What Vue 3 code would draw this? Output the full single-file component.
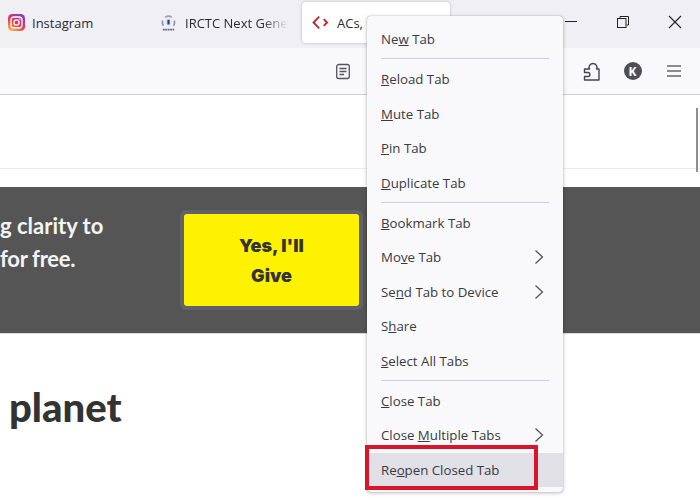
<template>
  <div class="window">
    <div class="tabbar">
      <div v-for="tab in tabs" :key="tab.label" class="tab" :class="{ active: tab.active }">
        <svg v-if="tab.icon === 'insta'" class="favicon" viewBox="0 0 18 18">
          <defs>
            <linearGradient id="ig" x1="0.2" y1="1" x2="0.8" y2="0">
              <stop offset="0" stop-color="#fdb44a" />
              <stop offset="0.45" stop-color="#e8384f" />
              <stop offset="0.75" stop-color="#c22f9b" />
              <stop offset="1" stop-color="#6a4bd0" />
            </linearGradient>
          </defs>
          <rect width="18" height="18" rx="4.5" fill="url(#ig)" />
          <rect x="3.2" y="3.2" width="11.6" height="11.6" rx="3.2" fill="none" stroke="#fff" stroke-width="1.4" />
          <circle cx="9" cy="9" r="2.7" fill="none" stroke="#fff" stroke-width="1.4" />
          <circle cx="12.6" cy="5.4" r="0.8" fill="#fff" />
        </svg>
        <svg v-else-if="tab.icon === 'irctc'" class="favicon" viewBox="0 0 18 18">
          <path d="M5.500 3.500a6 6 0 0 1 7 0" fill="none" stroke="#9a9fba" stroke-width="1.800" />
          <path d="M2.800 7a6.500 6.500 0 0 0 .7 5.500M15.200 7a6.500 6.500 0 0 1-.7 5.500" fill="none" stroke="#8a90b2" stroke-width="1.800" />
          <circle cx="9" cy="8.500" r="4" fill="#e4e6f0" />
          <path d="M7.800 6h2.400v5H7.800z" fill="#2e3a80" />
          <path d="M3 16.500h12" stroke="#5a64a0" stroke-width="1.800" stroke-dasharray="2 0.6" />
        </svg>
        <svg v-else class="favicon" viewBox="0 0 18 18">
          <path d="M7.600 2.800 1.600 9l6 6.200" fill="none" stroke="#c4262e" stroke-width="2" />
          <path d="M12.400 5.400 16 9l-3.600 3.600" fill="none" stroke="#c4262e" stroke-width="2" />
        </svg>
        <span class="tab-label" :class="{ faded: tab.faded }">{{ tab.label }}</span>
      </div>
      <div class="controls">
        <div class="control">
          <svg width="14" height="14" viewBox="0 0 14 14"><path d="M1 6.500h12" stroke="#222" stroke-width="1" /></svg>
        </div>
        <div class="control">
          <svg width="14" height="14" viewBox="0 0 14 14">
            <path d="M4 3V1.500h8.500V10H10.500" fill="none" stroke="#222" />
            <rect x="1.500" y="3.500" width="8.500" height="9" fill="none" stroke="#222" />
          </svg>
        </div>
        <div class="control">
          <svg width="14" height="14" viewBox="0 0 14 14"><path d="M1 1l12 12M13 1 1 13" stroke="#222" stroke-width="1.100" /></svg>
        </div>
      </div>
    </div>

    <div class="navbar">
      <svg class="reader" width="16" height="17" viewBox="0 0 16 17">
        <rect x="1.700" y="1.500" width="12.600" height="14" rx="2" fill="none" stroke="#55555a" stroke-width="1.300" />
        <path d="M4.500 5.500h7M4.500 8.500h7M4.500 11.500h4.500" stroke="#55555a" stroke-width="1.300" />
      </svg>
      <div class="nav-slot">
        <svg width="18" height="19" viewBox="0 0 18 19">
          <path d="M1.500 7H6.500C5.500 5.500 6 1.500 10 1.500C14 1.500 14.500 5.500 13.500 7H16V18H1.500V14.500H5C7.500 14.500 7.500 10.500 5 10.500H1.500Z" fill="none" stroke="#44444a" stroke-width="1.400" stroke-linejoin="round" />
        </svg>
      </div>
      <div class="nav-slot"><span class="avatar">K</span></div>
      <div class="nav-slot">
        <svg width="14" height="14" viewBox="0 0 14 14"><path d="M0 2h14M0 7h14M0 12h14" stroke="#66666c" stroke-width="1.400" /></svg>
      </div>
    </div>

    <div class="page">
      <div class="page-top"></div>
      <div class="banner">
        <p class="banner-text">
          <span class="line">g clarity to</span>
          <span class="line tail">for free.</span>
        </p>
        <div class="give-ring">
          <div class="give-btn">Yes, I'll<br />Give</div>
        </div>
      </div>
      <h1 class="heading">planet</h1>
      <div class="thumb"></div>
    </div>

    <div class="menu">
      <template v-for="(item, i) in menu" :key="i">
        <div v-if="item.sep" class="sep"></div>
        <div v-else class="item" :class="{ hover: item.hover }">
          <span>{{ item.before }}<u>{{ item.key }}</u>{{ item.after }}</span>
          <svg v-if="item.sub" class="chevron" width="10" height="16" viewBox="0 0 10 16">
            <path d="M1.500 1.500 8.500 8l-7 6.500" fill="none" stroke="#55555a" stroke-width="1.300" />
          </svg>
        </div>
      </template>
    </div>
    <div class="callout"></div>
  </div>
</template>

<script setup>
const tabs = [
  { label: 'Instagram', icon: 'insta' },
  { label: 'IRCTC Next Gene', icon: 'irctc', faded: true },
  { label: 'ACs,', icon: 'code', active: true },
]

const menu = [
  { before: 'Ne', key: 'w', after: ' Tab' },
  { sep: true },
  { before: '', key: 'R', after: 'eload Tab' },
  { before: '', key: 'M', after: 'ute Tab' },
  { before: '', key: 'P', after: 'in Tab' },
  { before: '', key: 'D', after: 'uplicate Tab' },
  { sep: true },
  { before: '', key: 'B', after: 'ookmark Tab' },
  { before: 'Mo', key: 'v', after: 'e Tab', sub: true },
  { before: 'Se', key: 'n', after: 'd Tab to Device', sub: true },
  { before: 'S', key: 'h', after: 'are' },
  { before: '', key: 'S', after: 'elect All Tabs' },
  { sep: true },
  { before: '', key: 'C', after: 'lose Tab' },
  { before: 'Close ', key: 'M', after: 'ultiple Tabs', sub: true },
  { before: 'Re', key: 'o', after: 'pen Closed Tab', hover: true },
]
</script>

<style>
html,
body {
  margin: 0;
  overflow: hidden;
}
</style>

<style scoped>
.window {
  position: relative;
  width: 700px;
  height: 500px;
  overflow: hidden;
  background: #fff;
  font-family: "Open Sans", "Noto Sans", sans-serif;
  color: #2b2a33;
}

.tabbar {
  display: flex;
  height: 48px;
  background: #f0f0f4;
}

.tab {
  display: flex;
  align-items: center;
  gap: 8px;
  box-sizing: border-box;
  width: 151px;
  height: 41px;
  margin-top: 2px;
  padding-left: 9px;
  border-radius: 4px;
  font-size: 13px;
  overflow: hidden;
  white-space: nowrap;
}

.tab:first-child {
  gap: 7px;
  padding-left: 8px;
}

.tab.active {
  width: 148px;
  padding-left: 10px;
  background: #fff;
  box-shadow: 0 0 3px rgba(0, 0, 0, 0.25);
}

.tab-label.faded {
  -webkit-mask-image: linear-gradient(to right, #000 75%, transparent);
  mask-image: linear-gradient(to right, #000 75%, transparent);
}

.favicon {
  flex: none;
  width: 17px;
  height: 17px;
}

.controls {
  display: flex;
  margin-left: auto;
  margin-right: -1px;
}

.control {
  display: flex;
  align-items: center;
  justify-content: center;
  width: 52px;
  height: 44px;
}

.navbar {
  display: flex;
  align-items: center;
  justify-content: flex-end;
  box-sizing: border-box;
  height: 47px;
  padding-right: 6px;
  background: #f9f9fb;
  border-bottom: 1px solid #cfcfd8;
}

.reader {
  margin-right: 220px;
}

.nav-slot {
  display: flex;
  align-items: center;
  justify-content: center;
  width: 41px;
}

.avatar {
  display: flex;
  align-items: center;
  justify-content: center;
  width: 18px;
  height: 18px;
  border-radius: 50%;
  background: #4f4f57;
  color: #fff;
  font-size: 12px;
  font-weight: 700;
}

.page {
  position: relative;
  height: 405px;
}

.page-top {
  height: 73px;
  border-bottom: 1px solid #ececec;
  margin-bottom: 18px;
}

.banner {
  display: flex;
  height: 147px;
  box-sizing: border-box;
  padding-top: 27px;
  background: #555;
  border-bottom: 1px solid #ddd;
}

.banner-text {
  width: 184px;
  margin: -5px 0 0;
  color: #f4f4f4;
  font-family: Lato, sans-serif;
  font-size: 22px;
  font-weight: 700;
  line-height: 33px;
}

.line {
  display: block;
}

.tail {
  letter-spacing: -0.3px;
}

.give-ring {
  box-sizing: border-box;
  width: 183px;
  height: 100px;
  margin: -4px 0 0 -4px;
  padding: 4px;
  border-radius: 6px;
  background: #62626a;
}

.give-btn {
  height: 92px;
  box-sizing: border-box;
  padding-top: 17px;
  border-radius: 3px;
  background: #fff200;
  color: #333;
  font-family: Inter, sans-serif;
  font-size: 18px;
  font-weight: 900;
  line-height: 30px;
  text-align: center;
}

.heading {
  margin: 49px 0 0 9px;
  color: #333;
  font-family: Lato, sans-serif;
  font-size: 40px;
  font-weight: 900;
  line-height: 48px;
}

.thumb {
  position: absolute;
  top: 13px;
  right: 2px;
  width: 2px;
  height: 64px;
  background: #8f8f8f;
}

.menu {
  position: absolute;
  top: 16px;
  left: 367px;
  box-sizing: border-box;
  width: 196px;
  height: 476px;
  padding: 6px 0;
  background: #f9f9fb;
  border-radius: 4px;
  box-shadow: 0 0 1px rgba(0, 0, 0, 0.45), 0 1px 4px rgba(0, 0, 0, 0.25);
  color: #3a3a42;
  font-size: 13.250px;
}

.item {
  display: flex;
  align-items: center;
  justify-content: space-between;
  height: 34.500px;
  padding: 0 19px 0 14px;
  white-space: nowrap;
}

.item.hover {
  background: #e0e0e6;
}

.chevron {
  flex: none;
}

.sep {
  height: 1px;
  margin: 1.500px 14px 3px;
  background: #cfcfd8;
}

.callout {
  position: absolute;
  top: 445px;
  left: 365px;
  box-sizing: border-box;
  width: 173px;
  height: 45px;
  border: 4px solid #d8152a;
}
</style>
